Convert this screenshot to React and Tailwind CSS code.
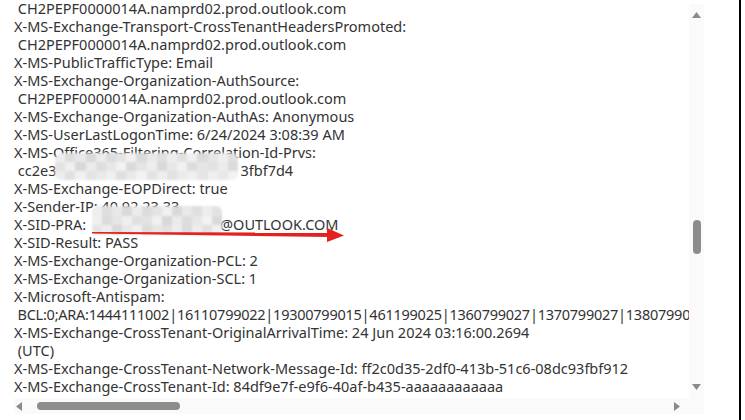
const lines = [
  " CH2PEPF0000014A.namprd02.prod.outlook.com",
  "X-MS-Exchange-Transport-CrossTenantHeadersPromoted:",
  " CH2PEPF0000014A.namprd02.prod.outlook.com",
  "X-MS-PublicTrafficType: Email",
  "X-MS-Exchange-Organization-AuthSource:",
  " CH2PEPF0000014A.namprd02.prod.outlook.com",
  "X-MS-Exchange-Organization-AuthAs: Anonymous",
  "X-MS-UserLastLogonTime: 6/24/2024 3:08:39 AM",
  "X-MS-Office365-Filtering-Correlation-Id-Prvs:",
  [" cc2e3", 184, "3fbf7d4"],
  "X-MS-Exchange-EOPDirect: true",
  "X-Sender-IP: 40.92.23.33",
  ["X-SID-PRA: ", 130, "@OUTLOOK.COM"],
  "X-SID-Result: PASS",
  "X-MS-Exchange-Organization-PCL: 2",
  "X-MS-Exchange-Organization-SCL: 1",
  "X-Microsoft-Antispam:",
  " BCL:0;ARA:1444111002|16110799022|19300799015|461199025|1360799027|1370799027|1380799027|1602099003",
  "X-MS-Exchange-CrossTenant-OriginalArrivalTime: 24 Jun 2024 03:16:00.2694",
  " (UTC)",
  "X-MS-Exchange-CrossTenant-Network-Message-Id: ff2c0d35-2df0-413b-51c6-08dc93fbf912",
  "X-MS-Exchange-CrossTenant-Id: 84df9e7f-e9f6-40af-b435-aaaaaaaaaaaa",
  "X-MS-Exchange-CrossTenant-RMS-PersistedConsumerOrg: 00000000-0000-0000-0000-000000000000",
];

const mosaic = [
  "#eeeeee", "#dedede", "#e8e8e8", "#d9d9d9", "#ececec", "#dcdcdc", "#e4e4e4", "#f1f1f1", "#dadada", "#e9e9e9", "#dfdfdf", "#ededed", "#e2e2e2", "#f0f0f0", "#dbdbdb", "#e6e6e6", "#efefef", "#e0e0e0",
  "#e3e3e3", "#f0f0f0", "#d8d8d8", "#ebebeb", "#dddddd", "#e7e7e7", "#f2f2f2", "#dadada", "#e5e5e5", "#eeeeee", "#d9d9d9", "#e8e8e8", "#f1f1f1", "#dcdcdc", "#e6e6e6", "#e1e1e1", "#ececec", "#dbdbdb",
  "#ededed", "#e1e1e1", "#f1f1f1", "#e4e4e4", "#eaeaea", "#f0f0f0", "#dfdfdf", "#e9e9e9", "#f2f2f2", "#e3e3e3", "#eeeeee", "#e2e2e2", "#ebebeb", "#f0f0f0", "#e5e5e5", "#efefef", "#e8e8e8", "#f2f2f2",
];

function Blur({ cols, className }) {
  return (
    <div className={`absolute grid overflow-hidden rounded-[6px] blur-[1px] ${className}`} style={{ gridTemplateColumns: `repeat(${cols}, 1fr)` }}>
      {mosaic.slice(0, cols * 3).map((c, i) => (
        <div key={i} style={{ background: c }} />
      ))}
    </div>
  );
}

function Tri({ dir }) {
  const pts = {
    up: "0,6 4.5,0 9,6",
    down: "0,0 4.5,6 9,0",
    left: "6,0 0,4.5 6,9",
    right: "0,0 6,4.5 0,9",
  }[dir];
  const w = dir === "up" || dir === "down" ? 9 : 6;
  const h = dir === "up" || dir === "down" ? 6 : 9;
  return (
    <svg width={w} height={h} viewBox={`0 0 ${w} ${h}`}>
      <polygon points={pts} fill="#8a8a8a" />
    </svg>
  );
}

export default function App() {
  return (
    <div className="relative flex h-[420px] w-[745px] overflow-hidden bg-white font-['Noto_Sans',sans-serif]">
      {/* scroll pane */}
      <div className="flex w-[704px] flex-col pb-[6px]">
        <div className="flex min-h-0 flex-1">
          <div className="min-w-0 flex-1 overflow-hidden pl-[14px]">
            <div className="-mt-[1px] text-[14.5px] leading-[18px] text-[#333333]">
              {lines.map((l, i) =>
                Array.isArray(l) ? (
                  <div key={i} className="whitespace-pre">
                    {l[0]}
                    <span className="inline-block" style={{ width: l[1] }} />
                    {l[2]}
                  </div>
                ) : (
                  <div key={i} className={`whitespace-pre ${l.startsWith(" BCL") ? "tracking-[-0.25px]" : ""}`}>
                    {l}
                  </div>
                )
              )}
            </div>
          </div>
          {/* vertical scrollbar */}
          <div className="mt-[4px] flex w-[15px] flex-col items-center bg-[#fafafa]">
            <div className="mt-[8px]">
              <Tri dir="up" />
            </div>
            <div className="mt-[202px] h-[34px] w-[8px] rounded-full bg-[#8c8c8c]" />
            <div className="mt-auto mb-[8px]">
              <Tri dir="down" />
            </div>
          </div>
        </div>
        {/* horizontal scrollbar */}
        <div className="ml-[14px] flex h-[16px] items-center bg-[#fafafa]">
          <div className="ml-[2px]">
            <Tri dir="left" />
          </div>
          <div className="ml-[15px] h-[8px] w-[143px] rounded-full bg-[#8c8c8c]" />
          <div className="ml-auto mr-[24px]">
            <Tri dir="right" />
          </div>
        </div>
      </div>
      <div className="flex-1" />
      <div className="w-[2px] bg-black" />
      <div className="w-[4px]" />

      {/* redactions */}
      <Blur cols={18} className="left-[55px] top-[153px] h-[27px] w-[183px]" />
      <Blur cols={13} className="left-[92px] top-[206px] h-[29px] w-[130px]" />

      {/* red arrow */}
      <svg className="absolute left-0 top-0" width="745" height="420" viewBox="0 0 745 420">
        <polygon points="92,232 329,232.6 329,237 92,233.6" fill="#e3211f" />
        <polygon points="327,228 344,235.5 327,242" fill="#e3211f" />
      </svg>
    </div>
  );
}
